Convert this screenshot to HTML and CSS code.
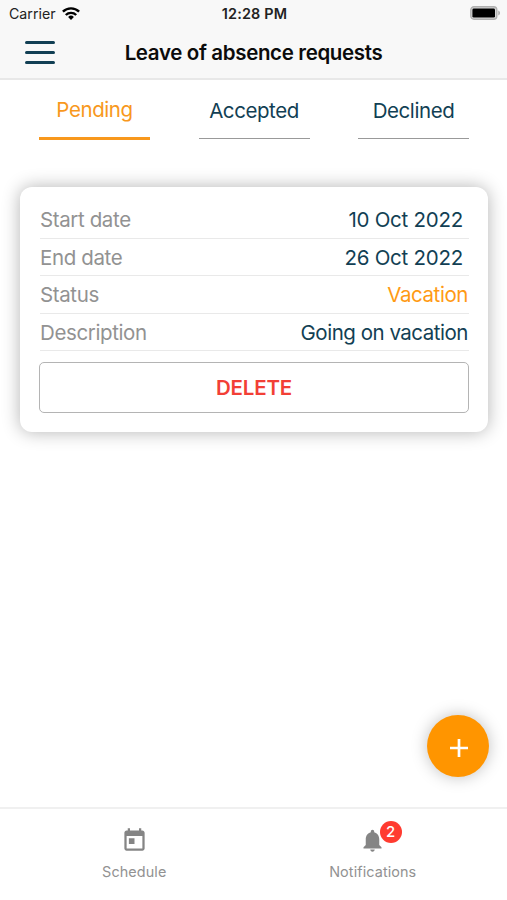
FILE: index.html
```html
<!DOCTYPE html>
<html lang="en">
<head>
<meta charset="utf-8">
<title>Leave of absence requests</title>
<link rel="stylesheet" href="styles.css">
</head>
<body>
<header class="header">
  <div class="status-bar">
    <div class="carrier"><span>Carrier</span>
      <svg class="wifi" viewBox="0 0 18 13"><g fill="none" stroke="#000" stroke-width="2.4"><path d="M.9 4.7a11.6 11.6 0 0 1 16.2 0"/><path d="M3.8 8a7.4 7.4 0 0 1 10.4 0"/></g><path d="M9 13 6.1 10a4.2 4.2 0 0 1 5.8 0z"/></svg>
    </div>
    <span class="time">12:28 PM</span>
    <svg class="battery" viewBox="0 0 30 14"><rect x=".8" y=".8" width="26" height="12.4" rx="3.2" fill="#d8d8d8" stroke="#b0b0b0" stroke-width="1.4"/><rect x="2.4" y="2.6" width="22.6" height="9" rx="1.4"/><path d="M28.3 4.6q1.7.7 1.7 2.4t-1.7 2.4z" fill="#a8a8a8"/></svg>
  </div>
  <div class="nav-bar">
    <button class="menu" aria-label="Menu"><i></i><i></i><i></i></button>
    <h1 class="title">Leave of absence requests</h1>
  </div>
</header>
<nav class="tabs">
  <a class="tab active">Pending</a>
  <a class="tab">Accepted</a>
  <a class="tab">Declined</a>
</nav>
<main class="content">
  <section class="card">
    <div class="row"><span class="label">Start date</span><span class="value date">10 Oct 2022</span></div>
    <div class="row"><span class="label">End date</span><span class="value date">26 Oct 2022</span></div>
    <div class="row"><span class="label">Status</span><span class="value pending">Vacation</span></div>
    <div class="row"><span class="label">Description</span><span class="value note">Going on vacation</span></div>
    <button class="delete">DELETE</button>
  </section>
</main>
<button class="fab" aria-label="Add"><svg viewBox="0 0 20 20"><path d="M10 1v18M1 10h18" stroke="#fff" stroke-width="2.7"/></svg></button>
<footer class="bottom-bar">
  <a class="bottom-item"><svg class="today" viewBox="0 0 24 24"><path d="M19 3h-1V1h-2v2H8V1H6v2H5c-1.11 0-1.99.9-1.99 2L3 19c0 1.1.89 2 2 2h14c1.1 0 2-.9 2-2V5c0-1.1-.9-2-2-2zm0 16H5V8h14v11zM7 10h5v5H7z"/></svg><span>Schedule</span></a>
  <a class="bottom-item"><svg class="bell" viewBox="0 0 24 24"><path d="M12 22c1.1 0 2-.9 2-2h-4c0 1.1.89 2 2 2zm6-6v-5c0-3.07-1.64-5.64-4.5-6.32V4c0-.83-.67-1.5-1.5-1.5s-1.5.67-1.5 1.5v.68C7.63 5.36 6 7.92 6 11v5l-2 2v1h16v-1l-2-2z"/></svg><b class="badge">2</b><span>Notifications</span></a>
</footer>
</body>
</html>
```
FILE: styles.css
```css
* { box-sizing: border-box; }
body {
  margin: 0;
  height: 900px;
  display: flex;
  flex-direction: column;
  overflow: hidden;
  background: #fff;
  color: #123f54;
  font-family: Inter, "Liberation Sans", sans-serif;
  font-size: 20.5px;
  letter-spacing: -.42px;
}
button { padding: 0; font: inherit; }
.header {
  height: 80px;
  background: #f8f8f8;
  border-bottom: 2px solid #e8e8e8;
}
.status-bar {
  height: 27px;
  display: grid;
  grid-template-columns: 1fr auto 1fr;
  align-items: center;
  padding: 0 7px 0 9px;
  color: #222;
  font-size: 14.2px;
  letter-spacing: 0;
}
.carrier { display: flex; align-items: center; gap: 6px; }
.wifi { width: 18px; height: 13px; margin-top: -1px; }
.time { font-weight: 600; font-size: 14.4px; letter-spacing: .2px; }
.battery { width: 30px; height: 14px; justify-self: end; margin-top: -1px; }
.nav-bar {
  height: 51px;
  display: grid;
  grid-template-columns: 55px 1fr 55px;
  align-items: center;
}
.menu {
  margin-left: 25px;
  width: 30px;
  display: flex;
  flex-direction: column;
  gap: 7px;
  border: 0;
  background: none;
}
.menu i { height: 2.7px; border-radius: 2px; background: #123f54; }
.title {
  margin: 0;
  text-align: center;
  white-space: nowrap;
  font-size: 20.5px;
  letter-spacing: -.35px;
  font-weight: 600;
  color: #0b0b0b;
}
.tabs {
  display: flex;
  justify-content: space-between;
  padding: 0 38px 0 39px;
}
.tab {
  width: 111px;
  height: 59px;
  padding-top: 19px;
  line-height: 24px;
  text-align: center;
  border-bottom: 1.5px solid #999;
}
.tab.active { height: 60px; padding-top: 18px; color: #f8981d; border-bottom: 3px solid #f8981d; }
.content { flex: 1; padding: 47px 19px 0 20px; }
.card {
  height: 245px;
  padding: 14px 19px 0;
  border-radius: 12px;
  background: #fff;
  box-shadow: 0 0 18px rgba(0, 0, 0, .3);
}
.row {
  height: 37.5px;
  padding-top: 1px;
  margin-left: 1px;
  display: flex;
  align-items: center;
  justify-content: space-between;
  border-bottom: 1px solid #e9e9e9;
}
.label { color: #929292; letter-spacing: -.38px; }
.value { padding-right: 1px; }
.date { padding-right: 6px; letter-spacing: -.25px; }
.note { letter-spacing: -.48px; }
.pending { color: #ff9a14; }
.delete {
  display: block;
  width: 100%;
  height: 51px;
  margin-top: 11px;
  border: 1px solid #b4b4b4;
  border-radius: 5px;
  background: #fff;
  color: #f23f36;
  font-weight: 600;
  letter-spacing: -.2px;
}
.fab {
  position: fixed;
  left: 427px;
  top: 715px;
  width: 62px;
  height: 62px;
  display: grid;
  place-items: center;
  border: 0;
  border-radius: 50%;
  background: #ff9500;
  box-shadow: 0 0 16px rgba(0, 0, 0, .25);
}
.fab svg { width: 20px; height: 20px; margin: 3px 0 0 1px; }
.bottom-bar {
  height: 93px;
  display: flex;
  padding: 0 15px;
  border-top: 2px solid #f0f0f0;
  font-size: 14.4px;
  letter-spacing: .1px;
  color: #929292;
}
.bottom-item {
  position: relative;
  flex: 1;
  display: flex;
  flex-direction: column;
  align-items: center;
  padding-top: 18px;
}
.bottom-item svg { width: 27px; height: 27px; fill: #858585; }
.bottom-item span { margin-top: 9px; line-height: 18px; }
.badge {
  position: absolute;
  left: calc(50% + 7px);
  top: 12px;
  width: 22px;
  height: 22px;
  border-radius: 50%;
  background: #ff3b30;
  color: #fff;
  text-align: center;
  font-size: 15px;
  font-weight: 500;
  line-height: 22px;
}
```
